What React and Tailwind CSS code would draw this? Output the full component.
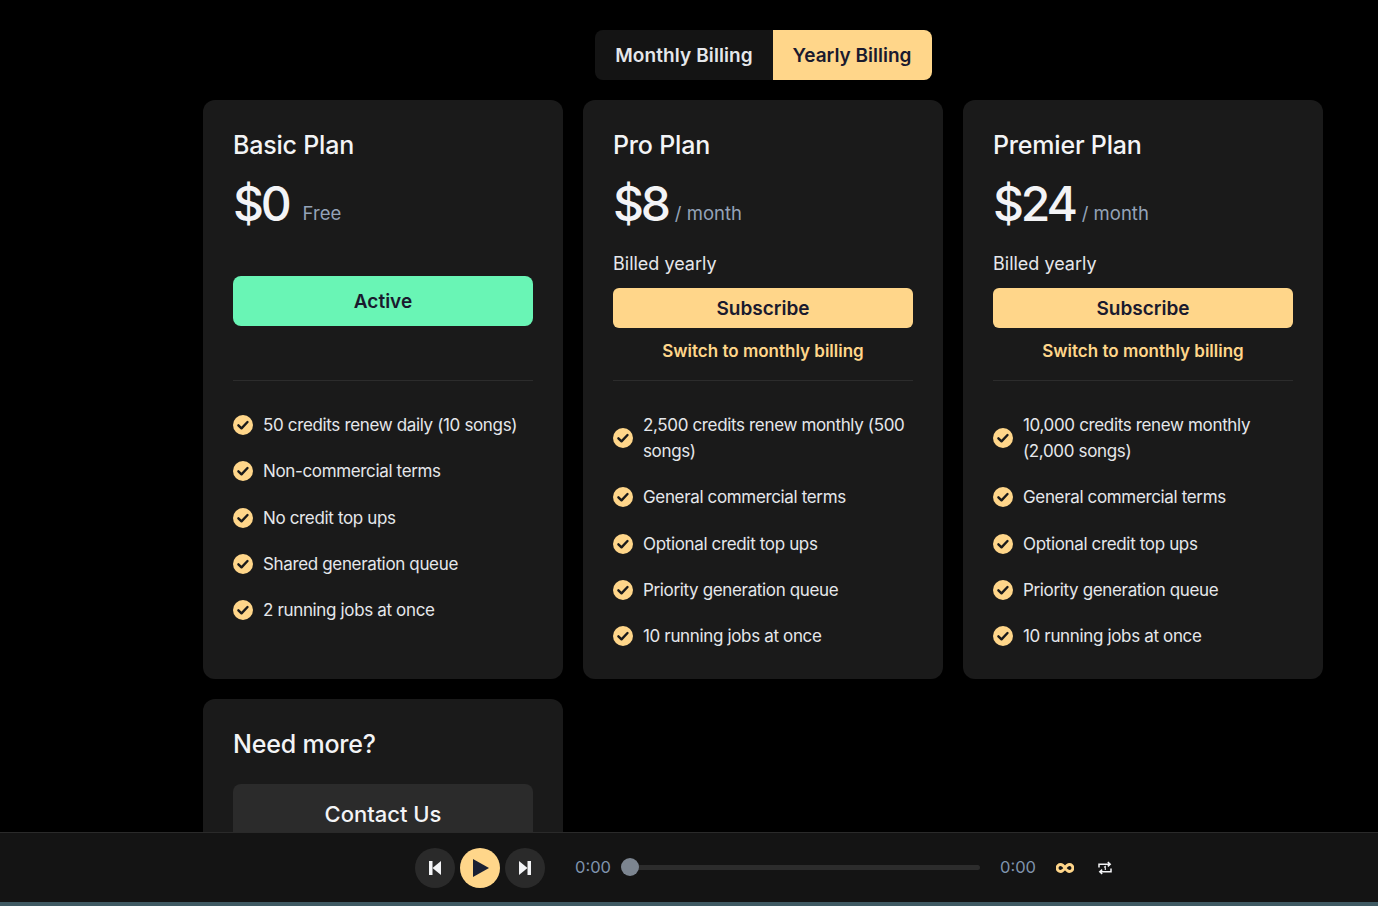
import React from "react";

const Check = () => (
  <svg viewBox="0 0 20 20" className="w-5 h-5 shrink-0">
    <circle cx="10" cy="10" r="10" fill="#ffd68a" />
    <path d="M5.4 10.3l3.1 3 6-6.3" fill="none" stroke="#1a1a1a" strokeWidth="2.4" strokeLinecap="round" strokeLinejoin="round" />
  </svg>
);

const plans = [
  {
    name: "Basic Plan",
    price: "$0",
    unit: "Free",
    basic: true,
    features: ["50 credits renew daily (10 songs)", "Non-commercial terms", "No credit top ups", "Shared generation queue", "2 running jobs at once"],
  },
  {
    name: "Pro Plan",
    price: "$8",
    unit: "/ month",
    features: ["2,500 credits renew monthly (500 songs)", "General commercial terms", "Optional credit top ups", "Priority generation queue", "10 running jobs at once"],
  },
  {
    name: "Premier Plan",
    price: "$24",
    unit: "/ month",
    features: ["10,000 credits renew monthly (2,000 songs)", "General commercial terms", "Optional credit top ups", "Priority generation queue", "10 running jobs at once"],
  },
];

function Card({ plan }) {
  return (
    <div className="bg-[#1a1a1a] rounded-xl p-[30px] h-[579px] flex flex-col">
      <h2 className="text-[25px] leading-[30px] font-medium text-[#f3f4f6] tracking-[-0.2px]">{plan.name}</h2>
      <div className="flex items-end mt-[16px] h-[56px]">
        <span className="text-[48px] leading-[56px] font-medium text-[#f3f4f6] tracking-[-3.2px]">{plan.price}</span>
        <span className={`text-[18.5px] leading-[26px] text-[#94a3b8] mb-[6px] ${plan.basic ? "ml-[14px]" : "ml-[7px]"}`}>{plan.unit}</span>
      </div>
      {plan.basic ? (
        <div className="h-[148px] flex flex-col">
          <button className="mt-[44px] h-[50px] pt-[2px] rounded-lg bg-[#69f5b5] text-[#1a1a2e] text-[19px] font-semibold">Active</button>
        </div>
      ) : (
        <div className="h-[148px] flex flex-col">
          <p className="mt-[19px] text-[18px] leading-[26px] text-[#e5e7eb]">Billed yearly</p>
          <button className="mt-[11px] h-10 pt-[2px] rounded-md bg-[#ffd68a] text-[#1a1a2e] text-[19px] font-semibold shrink-0">Subscribe</button>
          <p className="mt-[11px] text-[17px] leading-[24px] font-semibold text-[#ffd68a] text-center">Switch to monthly billing</p>
        </div>
      )}
      <div className="border-t border-[#2c2c2c] pt-[31px] flex flex-col gap-[20.25px] text-[17px] tracking-[-0.35px] leading-[26px] text-[#e5e7eb]">
        {plan.features.map((f) => (
          <div key={f} className="flex items-center gap-[10px]">
            <Check />
            <span>{f}</span>
          </div>
        ))}
      </div>
    </div>
  );
}

export default function App() {
  return (
    <div className="h-screen bg-black flex flex-col overflow-hidden font-['Inter',sans-serif]">
      <main className="flex-1 min-h-0 overflow-hidden pl-[203px] pr-[55px] pt-[30px]">
        <div className="flex justify-center mb-5">
          <div className="flex h-[50px] text-[19px] font-semibold rounded-lg overflow-hidden">
            <div className="bg-[#141414] text-[#e5e7eb] w-[178px] flex items-center justify-center pt-[2px] pl-px tracking-[0.1px]">Monthly Billing</div>
            <div className="bg-[#ffd68a] text-[#1a1a2e] w-[159px] flex items-center justify-center pt-[2px]">Yearly Billing</div>
          </div>
        </div>
        <div className="grid grid-cols-3 gap-5">
          {plans.map((p) => (
            <Card key={p.name} plan={p} />
          ))}
          <div className="bg-[#1a1a1a] rounded-xl p-[30px] h-[200px]">
            <h2 className="text-[25px] leading-[30px] font-medium text-[#f3f4f6] tracking-[-0.2px]">Need more?</h2>
            <button className="mt-[25px] w-full h-[60px] rounded-lg bg-[#2b2b2b] text-[#f3f4f6] text-[22px] font-medium">Contact Us</button>
          </div>
        </div>
      </main>
      <footer className="shrink-0 h-[74px] bg-[#141414] border-t border-[#2a2a2a] border-b-4 border-b-[#3f5a63] flex items-center pl-[415px]">
        <div className="flex items-center gap-[5px]">
          <button className="w-10 h-10 rounded-full bg-[#2a2a2a] flex items-center justify-center">
            <svg viewBox="0 0 12 14" className="w-3 h-[14px]" fill="#f3f4f6"><rect x="0" y="0" width="3.5" height="14" /><path d="M12 0v14L3.5 7z" /></svg>
          </button>
          <button className="w-10 h-10 rounded-full bg-[#ffd68a] flex items-center justify-center pl-[2px]">
            <svg viewBox="0 0 16 18" className="w-4 h-[18px]" fill="#1a2033"><path d="M0 0l16 9-16 9z" /></svg>
          </button>
          <button className="w-10 h-10 rounded-full bg-[#2a2a2a] flex items-center justify-center">
            <svg viewBox="0 0 12 14" className="w-3 h-[14px]" fill="#f3f4f6"><rect x="8.5" y="0" width="3.5" height="14" /><path d="M0 0v14l8.5-7z" /></svg>
          </button>
        </div>
        <span className="ml-[30px] w-[35px] text-[16.5px] text-[#7f93ad] -mt-px">0:00</span>
        <div className="relative ml-[20px] w-[350px] h-[5px] rounded-full bg-[#2c2c2c]">
          <div className="absolute -left-[9px] -top-[7px] w-[18px] h-[18px] rounded-full bg-[#7c8590]" />
        </div>
        <span className="ml-[20px] w-[35px] text-[16.5px] text-[#7f93ad] -mt-px">0:00</span>
        <svg viewBox="0 0 18 10" className="ml-[21px] w-[18px] h-[10px]" fill="none" stroke="#ffd68a" strokeWidth="2.8"><path d="M9 5C7.5 2.6 6.3 1.5 4.6 1.5A3.5 3.5 0 0 0 4.6 8.5C6.3 8.5 7.5 7.4 9 5C10.5 2.6 11.7 1.5 13.4 1.5A3.5 3.5 0 0 1 13.4 8.5C11.7 8.5 10.5 7.4 9 5Z" /></svg>
        <svg viewBox="0 0 14 14" className="ml-[24px] w-[14px] h-[14px]" fill="none" stroke="#f3f4f6" strokeWidth="1.5"><path d="M1 6.5V3.2h11M9.8 1l2.4 2.2-2.4 2.2M13 7.5v3.3H2M4.2 13l-2.4-2.2 2.4-2.2" /><path d="M6 6.2L7.3 5.5V9" strokeWidth="1.1" /></svg>
      </footer>
    </div>
  );
}
